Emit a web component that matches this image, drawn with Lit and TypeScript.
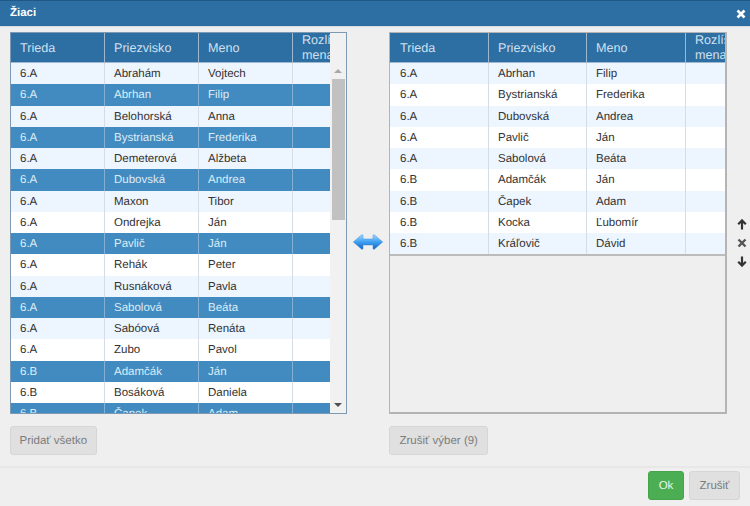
import { LitElement, html, css, svg } from 'lit';
import { customElement } from 'lit/decorators.js';
import { classMap } from 'lit/directives/class-map.js';

type Pupil = [string, string, string, boolean?];

const allPupils: Pupil[] = [
  ['6.A', 'Abrahám', 'Vojtech'],
  ['6.A', 'Abrhan', 'Filip', true],
  ['6.A', 'Belohorská', 'Anna'],
  ['6.A', 'Bystrianská', 'Frederika', true],
  ['6.A', 'Demeterová', 'Alžbeta'],
  ['6.A', 'Dubovská', 'Andrea', true],
  ['6.A', 'Maxon', 'Tibor'],
  ['6.A', 'Ondrejka', 'Ján'],
  ['6.A', 'Pavlič', 'Ján', true],
  ['6.A', 'Rehák', 'Peter'],
  ['6.A', 'Rusnáková', 'Pavla'],
  ['6.A', 'Sabolová', 'Beáta', true],
  ['6.A', 'Sabóová', 'Renáta'],
  ['6.A', 'Zubo', 'Pavol'],
  ['6.B', 'Adamčák', 'Ján', true],
  ['6.B', 'Bosáková', 'Daniela'],
  ['6.B', 'Čapek', 'Adam', true],
];

const chosenPupils: Pupil[] = [
  ['6.A', 'Abrhan', 'Filip'],
  ['6.A', 'Bystrianská', 'Frederika'],
  ['6.A', 'Dubovská', 'Andrea'],
  ['6.A', 'Pavlič', 'Ján'],
  ['6.A', 'Sabolová', 'Beáta'],
  ['6.B', 'Adamčák', 'Ján'],
  ['6.B', 'Čapek', 'Adam'],
  ['6.B', 'Kocka', 'Ľubomír'],
  ['6.B', 'Kráľovič', 'Dávid'],
];

const swapIcon = svg`
  <svg width="30" height="16" viewBox="0 0 30 16">
    <defs>
      <linearGradient id="swap" x1="0" y1="0" x2="0" y2="1">
        <stop offset="0" stop-color="#a4dcff" />
        <stop offset="0.45" stop-color="#46a6f4" />
        <stop offset="1" stop-color="#0e62c4" />
      </linearGradient>
    </defs>
    <path
      d="M0.3 8 L9 0.6 L10 1.2 V5 H20 V1.2 L21 0.6 L29.7 8 L21 15.4 L20 14.8 V11 H10 V14.8 L9 15.4 Z"
      fill="url(#swap)"
      stroke="#3f8fdc"
      stroke-width="0.5"
    />
  </svg>
`;

@customElement('app-root')
export class AppRoot extends LitElement {
  static styles = css`
    :host {
      display: flex;
      flex-direction: column;
      width: 750px;
      height: 506px;
      overflow: hidden;
      background: #efefef;
      font-family: 'Liberation Sans', Arial, sans-serif;
      font-size: 11.5px;
      color: #333;
      text-rendering: geometricPrecision;
    }

    .title {
      display: flex;
      align-items: center;
      justify-content: space-between;
      box-sizing: border-box;
      height: 27px;
      padding: 0 4px 0 10px;
      background: #2d6ea3;
      border-top: 1px solid #1f5785;
      border-bottom: 1px solid #d5dde4;
      color: #fff;
      font-weight: 700;
      line-height: 25px;
    }

    .close {
      display: block;
    }

    .body {
      flex: none;
      display: flex;
      height: 441px;
      padding: 5px 0 0 10px;
      box-sizing: border-box;
      border-bottom: 2px solid #e7e7e7;
    }

    .column {
      display: flex;
      flex-direction: column;
      align-items: flex-start;
    }

    .box {
      display: flex;
      box-sizing: border-box;
      width: 337px;
      height: 382px;
      border: 1px solid #7d9ab4;
      overflow: hidden;
    }

    .box.plain {
      width: 338px;
      border: 2px solid #b4b4b4;
      border-top-width: 1px;
      border-left-width: 1px;
    }

    .table {
      flex: none;
      width: 319px;
      overflow: hidden;
    }

    .plain .table {
      width: 335px;
      height: 221px;
      border-bottom: 2px solid #bcbcbc;
    }

    .head,
    .row {
      display: grid;
      grid-template-columns: 94px 94px 94px 60px;
    }

    .plain .row,
    .plain .head {
      grid-template-columns: 99px 98px 99px 60px;
    }

    .head {
      height: 30px;
      background: #2d6ea3;
      color: #cfe0ee;
      font-size: 12.6px;
      border-bottom: 1px solid #9fb8cd;
      box-sizing: border-box;
    }

    .head div {
      display: flex;
      align-items: center;
      padding-left: 9px;
      border-right: 1px solid #9fb8cd;
      white-space: nowrap;
      overflow: hidden;
    }

    .head .wrap {
      display: block;
      white-space: normal;
      line-height: 15px;
      border-right: none;
      height: 29px;
    }

    .plain .head div:first-child,
    .plain .row div:first-child {
      padding-left: 10px;
    }

    .row {
      height: 21.25px;
      line-height: 22px;
      background: #fff;
    }

    .row.striped {
      background: #edf5fe;
    }

    .row.picked {
      background: #428bc1;
      color: #dcebf6;
    }

    .row div {
      padding-left: 9px;
      border-right: 1px solid #d4dde5;
    }

    .row.picked div {
      border-right-color: #82afd3;
    }

    .row div:last-child {
      border-right: none;
    }

    .scroll {
      flex: 1;
      display: flex;
      flex-direction: column;
      align-items: center;
      padding-top: 30px;
      box-sizing: border-box;
      background: #f1f1f1;
    }

    .arrow {
      flex: none;
      height: 16px;
      width: 100%;
      display: flex;
      align-items: center;
      justify-content: center;
    }

    .arrow i {
      display: block;
      width: 0;
      height: 0;
      border-left: 4px solid transparent;
      border-right: 4px solid transparent;
    }

    .arrow.up i {
      border-bottom: 4px solid #a8a8a8;
    }

    .arrow.down i {
      border-top: 4px solid #505050;
    }

    .track {
      flex: 1;
      width: 13px;
    }

    .thumb {
      height: 141px;
      background: #c1c1c1;
    }

    .swap {
      flex: none;
      width: 42px;
      display: flex;
      justify-content: center;
      height: 382px;
      align-items: center;
      padding-top: 38px;
      box-sizing: border-box;
    }

    .order {
      flex: none;
      display: flex;
      flex-direction: column;
      align-items: center;
      gap: 8px;
      width: 23px;
      margin-left: 3px;
      height: 382px;
      justify-content: center;
      padding-top: 40px;
      box-sizing: border-box;
    }

    .btn {
      box-sizing: border-box;
      height: 29px;
      padding: 0 8.5px;
      background: #e0e0e0;
      border: 1px solid #d6d6d6;
      border-radius: 3px;
      color: #7c7c7c;
      font-family: inherit;
      font-size: 11.5px;
      text-rendering: inherit;
    }

    .btn.roomy {
      padding: 0 9.5px;
    }

    .column .btn {
      margin-top: 12px;
    }

    .foot {
      display: flex;
      justify-content: flex-end;
      gap: 5px;
      padding: 3px 10px 0 0;
    }

    .btn.ok {
      width: 36px;
      padding: 0;
      background: #4cae52;
      border-color: #47a44d;
      color: #e8f5e9;
    }

    .btn.cancel {
      width: 51px;
      padding: 0;
    }
  `;

  private renderHead() {
    return html`
      <div class="head">
        <div>Trieda</div>
        <div>Priezvisko</div>
        <div>Meno</div>
        <div class="wrap">Rozlíšenie mena</div>
      </div>
    `;
  }

  private renderRows(rows: Pupil[]) {
    return rows.map(
      ([grade, surname, name, picked], i) => html`
        <div class=${classMap({ row: true, striped: i % 2 === 0, picked: Boolean(picked) })}>
          <div>${grade}</div>
          <div>${surname}</div>
          <div>${name}</div>
          <div></div>
        </div>
      `,
    );
  }

  render() {
    return html`
      <div class="title">
        <span>Žiaci</span>
        <svg class="close" width="10" height="10" viewBox="0 0 10 10">
          <path d="M1.5 1.5 L8.5 8.5 M8.5 1.5 L1.5 8.5" stroke="#fff" stroke-width="2.6" />
        </svg>
      </div>
      <div class="body">
        <div class="column">
          <div class="box">
            <div class="table">${this.renderHead()}${this.renderRows(allPupils)}</div>
            <div class="scroll">
              <div class="arrow up"><i></i></div>
              <div class="track"><div class="thumb"></div></div>
              <div class="arrow down"><i></i></div>
            </div>
          </div>
          <button class="btn">Pridať všetko</button>
        </div>
        <div class="swap">${swapIcon}</div>
        <div class="column">
          <div class="box plain">
            <div class="table">${this.renderHead()}${this.renderRows(chosenPupils)}</div>
          </div>
          <button class="btn roomy">Zrušiť výber (9)</button>
        </div>
        <div class="order">
          <svg width="10" height="11" viewBox="0 0 10 11">
            <path d="M5 10.5 V2 M1.2 5.2 L5 1.4 L8.8 5.2" fill="none" stroke="#333" stroke-width="2.2" />
          </svg>
          <svg width="10" height="10" viewBox="0 0 10 10">
            <path d="M1.5 1.5 L8.5 8.5 M8.5 1.5 L1.5 8.5" stroke="#555" stroke-width="2.4" />
          </svg>
          <svg width="10" height="11" viewBox="0 0 10 11">
            <path d="M5 0.5 V9 M1.2 5.8 L5 9.6 L8.8 5.8" fill="none" stroke="#333" stroke-width="2.2" />
          </svg>
        </div>
      </div>
      <div class="foot">
        <button class="btn ok">Ok</button>
        <button class="btn cancel">Zrušiť</button>
      </div>
    `;
  }
}
